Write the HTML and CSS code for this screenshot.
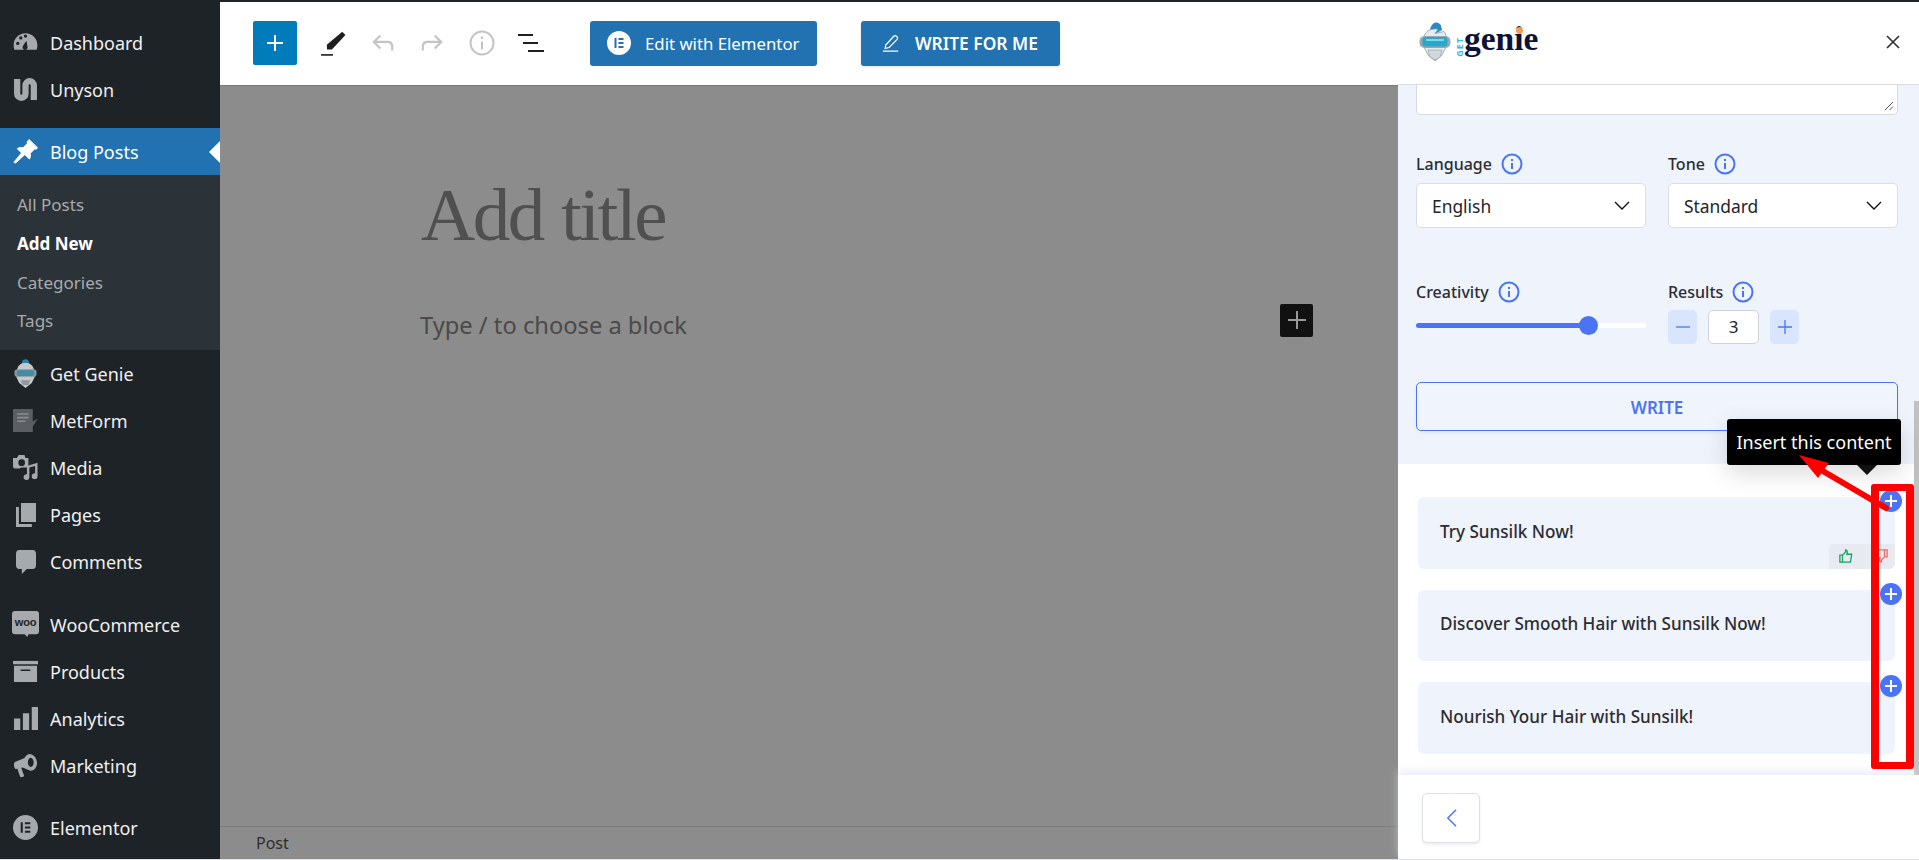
FILE: index.html
```html
<!DOCTYPE html>
<html lang="en">
<head>
    <meta charset="UTF-8">
    <title>Add New Post</title>
    <link rel="stylesheet" href="styles.css">
</head>
<body>
    <div class="app">
        <aside class="sidebar">
            <a class="menu-item">
                <svg class="menu-icon" viewBox="0 0 24 20"><path fill-rule="evenodd" d="M12 1C5.600 1 .6 6 .6 12.400c0 1.500.2 3 .7 4.600h21.400c.5-1.600.7-3.100.7-4.600C23.400 6 18.400 1 12 1zM4.600 12.500a1.600 1.600 0 1 1 0-3.200 1.600 1.600 0 0 1 0 3.200zM7.500 7.200a1.600 1.600 0 1 1 0-3.200 1.600 1.600 0 0 1 0 3.200zM12 5.400a1.600 1.600 0 1 1 0-3.200 1.600 1.600 0 0 1 0 3.200zM14 15a2.400 2.400 0 0 1-4.700-1c.2-1 2.900-4.800 3.700-5.500.2.900.9 5.400 1 6.500z"/></svg>
                <span>Dashboard</span>
            </a>
            <a class="menu-item">
                <svg class="menu-icon stroked" viewBox="0 0 24 24"><path d="M4 2v14a4 4 0 0 0 8 0V8a4 4 0 0 1 8 0v14"/></svg>
                <span>Unyson</span>
            </a>

            <a class="menu-item current">
                <svg class="menu-icon" viewBox="0 0 24 24"><path d="M15.500 0l8.500 8.500-1.800 1.800-1.300-.5-4 4c.7 2.400.2 4.400-1.300 5.900l-4.300-4.300L2.500 23.500l-1.500-.5-.5-1 7.200-8.500-4.100-4.100c1.500-1.500 3.500-2 5.900-1.300l4-4-.5-1.300z"/></svg>
                <span>Blog Posts</span>
            </a>
            <div class="submenu">
                <a>All Posts</a>
                <a class="on">Add New</a>
                <a>Categories</a>
                <a>Tags</a>
            </div>

            <a class="menu-item">
                <svg class="menu-icon tall" viewBox="0 0 24 30">
                    <path fill="#2f7fa6" d="M12 0c2 0 3.500 1 3.500 3l1 2.500h-9l1-2.500c0-2 1.500-3 3.500-3z"/>
                    <path fill="#c3c9cd" d="M3.500 10c1-4 4-6 8.500-6s7.500 2 8.500 6l1 3v6l-3 6-6.500 5-6.500-5-3-6v-6z"/>
                    <rect x="0.500" y="10.500" width="23" height="8" rx="3" fill="#8b979d"/>
                    <rect x="3" y="11.500" width="18" height="6" rx="2" fill="#3f8ea5"/>
                    <path fill="#8f979c" d="M7 22h10l-2 5H9z"/>
                </svg>
                <span>Get Genie</span>
            </a>
            <a class="menu-item">
                <svg class="menu-icon" viewBox="0 0 24 24"><path fill="#5b5f63" d="M0 1h19v12l5-3-5 7.500V23H0z"/><path fill="#8b8f93" d="M4 5h11v1.500H4zm0 3.500h11V10H4zm0 3.500h8v1.500H4z"/></svg>
                <span>MetForm</span>
            </a>
            <a class="menu-item">
                <svg class="menu-icon" viewBox="0 0 26 26"><path fill-rule="evenodd" d="M6 0h6l1 3h3v10H9c-.5 0-1 0-2 1H2a2 2 0 0 1-2-2V3h4zm3 4.500a3.500 3.500 0 1 0 0 7 3.500 3.500 0 0 0 0-7z"/><path d="M25.500 8v14a3 3 0 1 1-2.500-3V11.500l-6 1.500v10a3 3 0 1 1-2.500-3v-8.500z"/></svg>
                <span>Media</span>
            </a>
            <a class="menu-item">
                <svg class="menu-icon narrow" viewBox="0 0 24 24" preserveAspectRatio="none"><path d="M6 0h18v19H6z"/><path d="M0 4h3.500v17H19v3H0z"/></svg>
                <span>Pages</span>
            </a>
            <a class="menu-item">
                <svg class="menu-icon narrow" viewBox="0 0 24 24" preserveAspectRatio="none"><path d="M4 0h16a4 4 0 0 1 4 4v11a4 4 0 0 1-4 4h-7l-6 5v-5H4a4 4 0 0 1-4-4V4a4 4 0 0 1 4-4z"/></svg>
                <span>Comments</span>
            </a>

            <a class="menu-item gap-top">
                <svg class="menu-icon wide" viewBox="0 0 28 28"><path d="M3 0h22a3 3 0 0 1 3 3v18a3 3 0 0 1-3 3h-8l-1 3-3-3H3a3 3 0 0 1-3-3V3a3 3 0 0 1 3-3z"/><text x="14" y="16" text-anchor="middle" class="woo-mark">woo</text></svg>
                <span>WooCommerce</span>
            </a>
            <a class="menu-item">
                <svg class="menu-icon" viewBox="0 0 26 22"><path d="M0 0h26v3.500H0z"/><path fill-rule="evenodd" d="M1 5h24v17H1zm7 4v1.500h10V9z"/></svg>
                <span>Products</span>
            </a>
            <a class="menu-item">
                <svg class="menu-icon" viewBox="0 0 24 24"><path d="M1 12h6v11H1zm8.500-5h6v16h-6zM18 1h6v22h-6z"/></svg>
                <span>Analytics</span>
            </a>
            <a class="menu-item">
                <svg class="menu-icon" viewBox="0 0 26 26"><path fill-rule="evenodd" d="M17 1c4 0 8 4 8 9.500S21 19 18 18.500l-8-3.500-1.500.4 3 8-1 1.600H7.500l-3-8.500-2 .1c-2-2-2-7 0-7.600l9-3.500C13 4 14.500 1 17 1zm1.500 4c-2 0-3 2.500-3 5s1.200 4.500 3 4.500 3-2 3-4.500-1.200-5-3-5z"/></svg>
                <span>Marketing</span>
            </a>

            <a class="menu-item gap-top-small">
                <svg class="menu-icon" viewBox="0 0 26 26"><path fill-rule="evenodd" d="M13 0a13 13 0 1 1 0 26 13 13 0 0 1 0-26zM8 7.500v11h2.200v-11zm4.400 0v2.200h5.600V7.500zm0 4.400v2.200h5.600v-2.200zm0 4.400v2.200h5.600v-2.200z"/></svg>
                <span>Elementor</span>
            </a>
        </aside>

        <main class="editor">
            <header class="toolbar">
                <button class="inserter">
                    <svg viewBox="0 0 24 24" width="24" height="24"><path d="M11 4h2v7h7v2h-7v7h-2v-7H4v-2h7z" fill="#fff"/></svg>
                </button>
                <span class="tool tool-pen">
                    <svg viewBox="0 0 24 24" width="26" height="26"><path d="M20.500 1.500l3 3L11 18H6.500l-.2-4.500z" fill="#1e1e1e"/><path d="M1 23h11" stroke="#1e1e1e" stroke-width="1.500"/></svg>
                </span>
                <span class="tool tool-undo">
                    <svg viewBox="0 0 24 24" width="26" height="26" fill="none" stroke="#c4c4c4" stroke-width="2"><path d="M9.500 5l-6 6 6 6M4 11h12c3 0 4.500 2 4.500 4.500V19"/></svg>
                </span>
                <span class="tool tool-redo">
                    <svg viewBox="0 0 24 24" width="26" height="26" fill="none" stroke="#c4c4c4" stroke-width="2"><path d="M14.500 5l6 6-6 6M20 11H8c-3 0-4.500 2-4.500 4.500V19"/></svg>
                </span>
                <span class="tool tool-info">
                    <svg viewBox="0 0 26 26" width="26" height="26" fill="none" stroke="#c4c4c4" stroke-width="2"><circle cx="13" cy="13" r="11.500"/><path d="M13 11.500v8M13 6.500v2.500"/></svg>
                </span>
                <span class="tool tool-list">
                    <svg viewBox="0 0 26 20" width="26" height="20" stroke="#1e1e1e" stroke-width="1.800"><path d="M0 2h15M5 10h15M10 18h16"/></svg>
                </span>
                <button class="top-btn btn-elementor">
                    <svg viewBox="0 0 24 24" width="24" height="24"><path fill-rule="evenodd" fill="#fff" d="M12 0a12 12 0 1 1 0 24 12 12 0 0 1 0-24zM7.500 7v10h2V7zm4 0v2h5V7zm0 4v2h5v-2zm0 4v2h5v-2z"/></svg>
                    <span>Edit with Elementor</span>
                </button>
                <button class="top-btn btn-write">
                    <svg viewBox="0 0 20 20" width="18" height="18" fill="none" stroke="#fff" stroke-width="1.300"><path d="M4 12.500L13 2.500a2 2 0 0 1 3 0l.8.800a2 2 0 0 1 0 2.700L8 15l-4.500 1zM1 19h17"/></svg>
                    <span>WRITE FOR ME</span>
                </button>
            </header>
            <section class="canvas">
                <div class="post-area">
                    <h1 class="post-title">Add title</h1>
                    <div class="block-row">
                        <p class="block-hint">Type / to choose a block</p>
                        <button class="block-add">
                            <svg viewBox="0 0 18 18" width="18" height="18"><path d="M8 0h2v8h8v2h-8v8H8v-8H0V8h8z" fill="#9a9a9a"/></svg>
                        </button>
                    </div>
                </div>
                <footer class="editor-foot">Post</footer>
            </section>
        </main>

        <aside class="genie">
            <header class="genie-head">
                <div class="logo">
                    <svg class="logo-bot" viewBox="0 0 32 40" width="32" height="40">
                        <path fill="#2a8ac2" d="M11 7c1-3 3-6 5.500-6.500 2.500-.5 4.500 1 5.500 3l1 4.500-7 4z"/>
                        <path fill="#e6ebee" stroke="#8e9ba3" stroke-width=".8" d="M5 15c1-5 5-8 11-8 1 0 2 0 3 .5l-3 4 9-2c1 1 2 3 2 5.500v10l-4 8-7 6-7-6-4-8z"/>
                        <rect x="0.500" y="14" width="31" height="12" rx="5" fill="#9aa8b0"/>
                        <rect x="3.500" y="15" width="25" height="9.500" rx="3" fill="#29a9c9"/>
                        <path fill="#7fd6ea" d="M7 17h18v2H7z"/>
                        <path fill="#d0d9dd" stroke="#8e9ba3" stroke-width=".6" d="M9 28h14l-2 7-5 3-5-3z"/>
                    </svg>
                    <span class="logo-get">GET</span>
                    <span class="logo-word">genie</span>
                    <i class="logo-dot"></i>
                </div>
                <button class="close-btn">
                    <svg viewBox="0 0 16 16" width="16" height="16" stroke="#2d2d2d" stroke-width="1.600"><path d="M2 2l12 12M14 2L2 14"/></svg>
                </button>
            </header>

            <div class="genie-scroll">
                <section class="form-part">
                    <div class="textarea-stub">
                        <svg viewBox="0 0 10 10" width="10" height="10" stroke="#555" stroke-width="1"><path d="M1 9l8-8M5.500 9L9 5.500"/></svg>
                    </div>

                    <div class="form-row row-selects">
                        <div class="field">
                            <label>Language <svg class="info" viewBox="0 0 22 22"><circle cx="11" cy="11" r="9.500"/><path d="M11 10v6M11 6v2"/></svg></label>
                            <div class="select"><span>English</span><svg viewBox="0 0 16 10" width="16" height="10" fill="none" stroke="#111" stroke-width="1.400"><path d="M1 1l7 7 7-7"/></svg></div>
                        </div>
                        <div class="field">
                            <label>Tone <svg class="info" viewBox="0 0 22 22"><circle cx="11" cy="11" r="9.500"/><path d="M11 10v6M11 6v2"/></svg></label>
                            <div class="select"><span>Standard</span><svg viewBox="0 0 16 10" width="16" height="10" fill="none" stroke="#111" stroke-width="1.400"><path d="M1 1l7 7 7-7"/></svg></div>
                        </div>
                    </div>

                    <div class="form-row row-controls">
                        <div class="field">
                            <label>Creativity <svg class="info" viewBox="0 0 22 22"><circle cx="11" cy="11" r="9.500"/><path d="M11 10v6M11 6v2"/></svg></label>
                            <div class="slider"><div class="slider-fill"><i class="slider-thumb"></i></div></div>
                        </div>
                        <div class="field">
                            <label>Results <svg class="info" viewBox="0 0 22 22"><circle cx="11" cy="11" r="9.500"/><path d="M11 10v6M11 6v2"/></svg></label>
                            <div class="stepper">
                                <button class="step"><svg viewBox="0 0 16 16" width="16" height="16" stroke="#4a74f5" stroke-width="1.300"><path d="M1 8h14"/></svg></button>
                                <div class="step-value">3</div>
                                <button class="step"><svg viewBox="0 0 16 16" width="16" height="16" stroke="#4a74f5" stroke-width="1.300"><path d="M1 8h14M8 1v14"/></svg></button>
                            </div>
                        </div>
                    </div>

                    <button class="write-btn">WRITE</button>
                </section>

                <section class="results">
                    <div class="result">
                        <p>Try Sunsilk Now!</p>
                        <button class="insert"><svg viewBox="0 0 14 14" width="14" height="14" stroke="#fff" stroke-width="2"><path d="M1 7h12M7 1v12"/></svg></button>
                        <div class="rate">
                            <svg viewBox="0 0 16 16" width="14" height="14" fill="none" stroke="#16a35f" stroke-width="1.500"><path d="M1 7h3v8H1zM4 7l3.500-3.500V1c2 0 2.500 2 1.500 5h5.500l-1.500 9H4"/></svg>
                            <svg viewBox="0 0 16 16" width="14" height="14" fill="none" stroke="#ef6a6a" stroke-width="1.500"><path d="M15 9h-3V1h3zM12 9l-3.500 3.500V15c-2 0-2.500-2-1.500-5H1.500L3 1h9"/></svg>
                        </div>
                    </div>
                    <div class="result">
                        <p>Discover Smooth Hair with Sunsilk Now!</p>
                        <button class="insert"><svg viewBox="0 0 14 14" width="14" height="14" stroke="#fff" stroke-width="2"><path d="M1 7h12M7 1v12"/></svg></button>
                    </div>
                    <div class="result">
                        <p>Nourish Your Hair with Sunsilk!</p>
                        <button class="insert"><svg viewBox="0 0 14 14" width="14" height="14" stroke="#fff" stroke-width="2"><path d="M1 7h12M7 1v12"/></svg></button>
                    </div>
                </section>
                <div class="scroll-thumb"></div>
            </div>

            <footer class="genie-foot">
                <button class="back-btn"><svg viewBox="0 0 14 22" width="13" height="20" fill="none" stroke="#4a74f5" stroke-width="1.600"><path d="M12 2L3 11l9 9"/></svg></button>
            </footer>

            <div class="tooltip">Insert this content</div>
        </aside>
    </div>

    <!-- red annotation drawn over the screenshot -->
    <div class="mark-box"></div>
    <svg class="mark-arrow" viewBox="0 0 1919 860" width="1919" height="860">
        <path d="M1886 508L1816 467" stroke="#f00" stroke-width="6" stroke-linecap="round"/>
        <path d="M1799 455L1829 463L1818 478z" fill="#f00"/>
    </svg>
</body>
</html>
```

FILE: styles.css
```css
* {
    box-sizing: border-box;
}
html, body {
    margin: 0;
    height: 100%;
    overflow: hidden;
}
body {
    font-family: "Noto Sans", "Open Sans", Arial, sans-serif;
    background: #dde3ea;
    border-top: 2px solid #1d2327;
}
button {
    font-family: inherit;
    cursor: pointer;
}
p, h1 {
    margin: 0;
}
.app {
    display: flex;
    height: 857px;
}

/* left admin menu */
.sidebar {
    width: 220px;
    flex: none;
    background: #1d2327;
    padding-top: 17px;
}
.menu-item {
    display: flex;
    align-items: center;
    height: 47px;
    padding-left: 13px;
    color: #f0f0f1;
    font-size: 18px;
    gap: 12px;
}
.menu-icon {
    width: 25px;
    height: 25px;
    flex: none;
    fill: #a7aaad;
}
.menu-icon.stroked {
    fill: none;
    stroke: #a7aaad;
    stroke-width: 6;
}
.menu-icon.wide {
    width: 27px;
    height: 27px;
    margin: 0 -1px;
}
.menu-icon.tall {
    width: 23px;
    height: 29px;
    margin: 0 1px;
}
.menu-icon.narrow {
    width: 20px;
    height: 24px;
    margin: 0 2px 0 3px;
}
.woo-mark {
    font-family: "Liberation Sans", sans-serif;
    font-size: 11.500px;
    font-weight: 700;
    letter-spacing: -0.3px;
    fill: #1d2327;
}
.menu-item.current {
    margin-top: 15px;
    background: #2271b1;
    color: #fff;
    position: relative;
}
.menu-item.current .menu-icon {
    fill: #fff;
}
.menu-item.current::after {
    content: "";
    position: absolute;
    right: 0;
    top: 50%;
    margin-top: -11px;
    border: 11px solid transparent;
    border-right-color: #fff;
    border-left-width: 0;
}
.gap-top {
    margin-top: 16px;
}
.gap-top-small {
    margin-top: 15px;
}
.submenu {
    background: #2c3338;
    padding: 11px 0 9px 17px;
    display: flex;
    flex-direction: column;
}
.submenu a {
    height: 38.800px;
    line-height: 38.800px;
    font-size: 17px;
    color: #a7aaad;
}
.submenu a.on {
    color: #fff;
    font-weight: 700;
}

/* editor */
.editor {
    flex: 1;
    min-width: 0;
    display: flex;
    flex-direction: column;
    background: #8c8c8c;
}
.toolbar {
    height: 84px;
    flex: none;
    background: #fff;
    border-bottom: 1px solid #767676;
    display: flex;
    align-items: center;
    padding: 0 0 1px 33px;
}
.inserter {
    width: 44px;
    height: 44px;
    flex: none;
    border: 0;
    border-radius: 2px;
    background: #007cba;
    padding: 0;
    display: flex;
    align-items: center;
    justify-content: center;
}
.tool {
    display: flex;
    flex: none;
}
.tool-pen { margin-left: 23px; }
.tool-undo { margin-left: 24px; }
.tool-redo { margin-left: 23px; }
.tool-info { margin-left: 24px; }
.tool-list { margin-left: 23px; }
.top-btn {
    height: 45px;
    flex: none;
    border: 0;
    border-radius: 3px;
    background: #2271b1;
    color: #fff;
    display: flex;
    align-items: center;
    font-size: 16.800px;
}
.btn-elementor {
    width: 227px;
    margin-left: 46px;
    padding-left: 17px;
    gap: 14px;
}
.btn-write {
    width: 199px;
    margin-left: 44px;
    padding-left: 21px;
    gap: 15px;
    font-size: 17.400px;
    font-weight: 600;
    box-shadow: 0 1px 3px rgba(0,0,0,0.12);
}
.canvas {
    flex: 1;
    display: flex;
    flex-direction: column;
}
.post-area {
    flex: 1;
    padding: 89px 85px 0 201px;
}
.post-title {
    font-family: "Liberation Serif", serif;
    font-weight: 400;
    font-size: 75px;
    line-height: 80px;
    letter-spacing: -2.500px;
    word-spacing: 2px;
    color: #505050;
}
.block-row {
    display: flex;
    align-items: center;
    justify-content: space-between;
    margin-top: 48.500px;
}
.block-hint {
    font-size: 23.700px;
    color: #4a4a4a;
    line-height: 40px;
    margin-left: -1px;
}
.block-add {
    width: 33px;
    height: 33px;
    flex: none;
    padding: 0;
    border: 0;
    border-radius: 2px;
    background: #111;
    display: flex;
    align-items: center;
    justify-content: center;
    margin-bottom: 10px;
}
.editor-foot {
    height: 33px;
    flex: none;
    border-top: 1px solid #7b7b7b;
    padding-left: 36px;
    font-size: 16px;
    line-height: 32px;
    color: #2f2f2f;
}

/* genie side panel */
.genie {
    width: 521px;
    flex: none;
    display: flex;
    flex-direction: column;
    position: relative;
    background: #fff;
}
.genie-head {
    height: 83px;
    flex: none;
    background: #fff;
    border-bottom: 1px solid #d9dce1;
    display: flex;
    align-items: center;
    justify-content: space-between;
    padding: 0 18px 2px 21px;
}
.logo {
    display: flex;
    align-items: center;
    position: relative;
}
.logo-get {
    font-size: 9px;
    font-weight: 700;
    letter-spacing: 1px;
    color: #35b4f2;
    writing-mode: vertical-rl;
    transform: rotate(180deg);
    margin: 10px 0 0 4px;
    line-height: 10px;
}
.logo-word {
    font-family: "Liberation Serif", serif;
    font-weight: 700;
    font-size: 33.500px;
    line-height: 40px;
    color: #0e1236;
    margin: 0 0 6px -1px;
}
.logo-dot {
    position: absolute;
    left: 97px;
    top: 8px;
    width: 7px;
    height: 7px;
    border-radius: 50%;
    background: #f99a5b;
}
.close-btn {
    border: 0;
    background: none;
    padding: 0;
    display: flex;
}
.genie-scroll {
    flex: 1;
    min-height: 0;
    position: relative;
    background: #fff;
}
.form-part {
    background: #eff3fb;
    height: 379px;
    padding: 0 21px 0 18px;
}
.textarea-stub {
    height: 30px;
    background: #fff;
    border: 1px solid #d6d9df;
    border-top: 0;
    border-radius: 0 0 5px 5px;
    display: flex;
    align-items: flex-end;
    justify-content: flex-end;
    padding: 0 3px 3px 0;
}
.form-row {
    display: flex;
    gap: 22px;
}
.row-selects {
    margin-top: 35px;
}
.row-controls {
    margin-top: 50px;
}
.field {
    width: 230px;
}
.field label {
    display: flex;
    align-items: center;
    gap: 9px;
    height: 28px;
    font-size: 16px;
    font-weight: 500;
    color: #2c2c33;
}
.info {
    width: 22px;
    height: 22px;
    fill: none;
    stroke: #4a74f5;
    stroke-width: 2;
}
.select {
    margin-top: 5px;
    height: 45px;
    background: #fff;
    border: 1px solid #d9dde4;
    border-radius: 5px;
    display: flex;
    align-items: center;
    justify-content: space-between;
    padding: 0 15px;
    font-size: 17.400px;
    color: #23232b;
}
.slider {
    margin-top: 17px;
    height: 5px;
    background: #fff;
    border-radius: 3px;
}
.slider-fill {
    width: 173px;
    height: 5px;
    background: #4a74f5;
    border-radius: 3px;
    position: relative;
}
.slider-thumb {
    position: absolute;
    right: -9px;
    top: -7px;
    width: 19px;
    height: 19px;
    border-radius: 50%;
    background: #4a74f5;
}
.stepper {
    display: flex;
    align-items: center;
    gap: 11px;
    margin-top: 4px;
}
.step {
    width: 29px;
    height: 34px;
    flex: none;
    border: 0;
    padding: 0;
    border-radius: 5px;
    background: #d8e5fd;
    display: flex;
    align-items: center;
    justify-content: center;
}
.step-value {
    width: 51px;
    height: 34px;
    flex: none;
    background: #fff;
    border: 1px solid #cfd2d8;
    border-radius: 5px;
    text-align: center;
    font-size: 17px;
    line-height: 32px;
    color: #23232b;
}
.write-btn {
    display: block;
    width: 100%;
    height: 49px;
    margin-top: 38px;
    padding-top: 3px;
    border: 1px solid #4a74f5;
    border-radius: 5px;
    background: #f0f4fc;
    color: #4a74f5;
    font-size: 17px;
    font-weight: 600;
    box-shadow: 0 2px 4px rgba(0,0,0,0.05);
}
.results {
    padding: 33px 24px 0 20px;
    display: flex;
    flex-direction: column;
    gap: 21px;
}
.result {
    height: 71.500px;
    background: #eff3fb;
    border-radius: 6px;
    display: flex;
    align-items: center;
    padding: 0 0 3px 22px;
    position: relative;
    font-size: 17.100px;
    font-weight: 500;
    color: #2c2c33;
}
.insert {
    position: absolute;
    right: -7px;
    top: -7px;
    width: 22px;
    height: 22px;
    border: 0;
    padding: 0;
    border-radius: 50%;
    background: #4a74f5;
    display: flex;
    align-items: center;
    justify-content: center;
}
.rate {
    position: absolute;
    right: 0;
    bottom: 0;
    width: 66px;
    height: 25px;
    background: #e7eaf0;
    border-radius: 4px 0 6px 0;
    display: flex;
    align-items: center;
    gap: 21px;
    padding-left: 10px;
}
.scroll-thumb {
    position: absolute;
    right: 0;
    top: 316px;
    bottom: 0;
    width: 5px;
    background: #c1c1c1;
}
.genie-foot {
    height: 84px;
    flex: none;
    background: #fff;
    padding: 18px 0 0 24px;
    box-shadow: 0 -4px 8px rgba(220,225,240,0.6);
    position: relative;
}
.back-btn {
    width: 58px;
    height: 50px;
    padding: 0;
    background: #fff;
    border: 1px solid #dcdfe5;
    border-radius: 5px;
    display: flex;
    align-items: center;
    justify-content: center;
    box-shadow: 0 2px 3px rgba(0,0,0,0.07);
}
.tooltip {
    position: absolute;
    left: 329px;
    top: 417px;
    width: 174px;
    height: 46px;
    background: #000;
    color: #fff;
    border-radius: 3px;
    font-size: 18px;
    line-height: 47px;
    text-align: center;
    box-shadow: 0 8px 24px rgba(0,0,0,0.15);
}
.tooltip::after {
    content: "";
    position: absolute;
    left: 130px;
    bottom: -10px;
    border: 10px solid transparent;
    border-top-color: #111;
    border-bottom-width: 0;
}

/* annotation */
.mark-box {
    position: absolute;
    left: 1871px;
    top: 484px;
    width: 43px;
    height: 285px;
    border: 7px solid #f00;
    border-width: 7px 8px;
    border-radius: 3px;
}
.mark-arrow {
    position: absolute;
    left: 0;
    top: 0;
    pointer-events: none;
}
```
